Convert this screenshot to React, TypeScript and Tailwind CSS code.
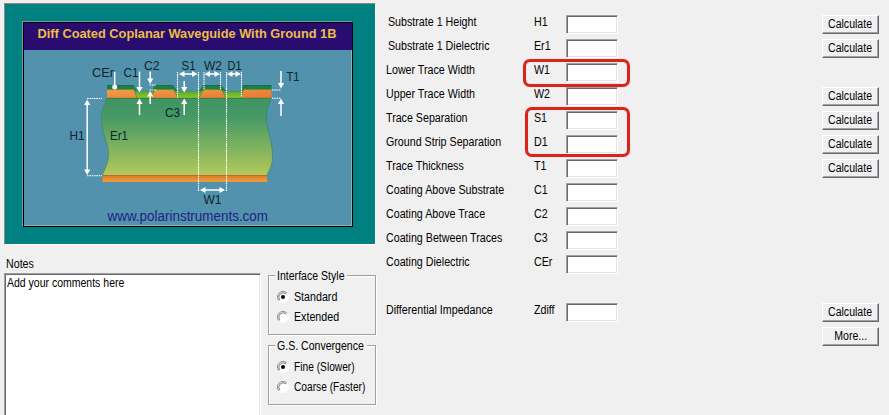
import type { ReactNode } from "react";

type Row = { label: string; symbol: string; calc?: boolean; indent?: boolean; gap?: boolean };

const rows: Row[] = [
  { label: "Substrate 1 Height", symbol: "H1", calc: true, indent: true },
  { label: "Substrate 1 Dielectric", symbol: "Er1", calc: true, indent: true },
  { label: "Lower Trace Width", symbol: "W1" },
  { label: "Upper Trace Width", symbol: "W2", calc: true },
  { label: "Trace Separation", symbol: "S1", calc: true },
  { label: "Ground Strip Separation", symbol: "D1", calc: true },
  { label: "Trace Thickness", symbol: "T1", calc: true },
  { label: "Coating Above Substrate", symbol: "C1" },
  { label: "Coating Above Trace", symbol: "C2" },
  { label: "Coating Between Traces", symbol: "C3" },
  { label: "Coating Dielectric", symbol: "CEr" },
  { label: "Differential Impedance", symbol: "Zdiff", calc: true, gap: true },
];

function Txt({ children, className = "origin-left scale-x-[0.89]" }: { children: ReactNode; className?: string }) {
  return <span className={`inline-block whitespace-nowrap ${className}`}>{children}</span>;
}

function Button({ children }: { children: ReactNode }) {
  return (
    <button className="flex h-[19px] w-[57px] shrink-0 items-center justify-center border border-t-white border-l-white border-r-[#696969] border-b-[#696969] bg-[#f0f0f0] leading-none shadow-[inset_-1px_-1px_0_#a0a0a0]">
      <Txt className="origin-center -translate-y-px scale-x-[0.88]">{children}</Txt>
    </button>
  );
}

function Field() {
  return (
    <input className="h-[19px] w-[52px] shrink-0 border border-t-[#a0a0a0] border-l-[#a0a0a0] border-r-white border-b-white bg-white shadow-[inset_1px_1px_0_#696969,inset_-1px_-1px_0_#e3e3e3] outline-none" />
  );
}

function Radio({ label, checked, tight }: { label: string; checked?: boolean; tight?: boolean }) {
  return (
    <label className="flex h-5 items-center">
      <svg width="12" height="12" viewBox="0 0 12 12" className="mr-[5px] shrink-0">
        <circle cx="6" cy="6" r="5" fill="#fff" />
        <path d="M2.1 9.9A5.5 5.5 0 0 1 9.9 2.1" fill="none" stroke="#8c8c8c" />
        <path d="M2.9 9.1A4.4 4.4 0 0 1 9.1 2.9" fill="none" stroke="#606060" strokeWidth="0.8" />
        <path d="M2.1 9.9A5.5 5.5 0 0 0 9.9 2.1" fill="none" stroke="#fff" />
        {checked && <circle cx="6" cy="6" r="2" fill="#000" />}
      </svg>
      <Txt className={tight ? "origin-left scale-x-[0.85]" : "origin-left scale-x-[0.89]"}>{label}</Txt>
    </label>
  );
}

function Group({ title, legendWidth, children }: { title: string; legendWidth: string; children: ReactNode }) {
  return (
    <fieldset className="relative h-[60px] w-[108px] min-w-0 border border-[#a0a0a0] pt-[11px] pl-[8px] shadow-[1px_1px_0_#fff,inset_1px_1px_0_#fff]">
      <div className={`absolute -top-[8px] left-[6px] h-[14px] bg-[#f0f0f0] pl-[2px] leading-[16px] ${legendWidth}`}>
        <Txt className="origin-left scale-x-[0.88]">{title}</Txt>
      </div>
      {children}
    </fieldset>
  );
}

type ArrowProps = { x: number; y: number; dir: "up" | "down" | "left" | "right" };

function Head({ x, y, dir }: ArrowProps) {
  const turn = { up: 0, right: 90, down: 180, left: 270 }[dir];
  return <path d="M0 0L3.1 5.5H-3.1Z" fill="#fff" transform={`translate(${x} ${y}) rotate(${turn})`} />;
}

function VArrow({ x, from, to }: { x: number; from: number; to: number }) {
  const down = to > from;
  return (
    <g>
      <path d={`M${x} ${from}V${down ? to - 4 : to + 4}`} stroke="#fff" strokeWidth="1.5" />
      <Head x={x} y={to} dir={down ? "down" : "up"} />
    </g>
  );
}

function HSpan({ y, a, b }: { y: number; a: number; b: number }) {
  return (
    <g>
      <path d={`M${a + 4} ${y}H${b - 4}`} stroke="#fff" strokeWidth="1.5" />
      <Head x={a} y={y} dir="left" />
      <Head x={b} y={y} dir="right" />
    </g>
  );
}

const marks: [string, number, number, number][] = [
  ["CEr", 92, 77, 22],
  ["C1", 123.5, 77, 15],
  ["C2", 144, 69.5, 15.5],
  ["S1", 181.5, 69.5, 14],
  ["W2", 204, 69.5, 18],
  ["D1", 227.5, 69.5, 14],
  ["T1", 286.5, 81, 13],
  ["C3", 165, 117, 15],
  ["H1", 69.5, 139.5, 15],
  ["Er1", 110, 139.5, 18],
  ["W1", 203.5, 203.5, 18],
];

function Diagram() {
  return (
    <svg width="328" height="175" viewBox="24 50 328 175" className="block" fontFamily="Liberation Sans, Arial, sans-serif">
      <defs>
        <linearGradient id="substrate" x1="0" y1="0" x2="0" y2="1">
          <stop offset="0" stopColor="#3f9461" />
          <stop offset="0.25" stopColor="#479966" />
          <stop offset="0.6" stopColor="#79b05f" />
          <stop offset="1" stopColor="#b5ca5c" />
        </linearGradient>
        <linearGradient id="copper" x1="0" y1="0" x2="1" y2="1">
          <stop offset="0" stopColor="#ef9e48" />
          <stop offset="1" stopColor="#e57a30" />
        </linearGradient>
        <linearGradient id="ground" x1="0" y1="0" x2="0" y2="1">
          <stop offset="0" stopColor="#d97a2c" />
          <stop offset="1" stopColor="#f2a03a" />
        </linearGradient>
        <linearGradient id="resin" x1="0" y1="0" x2="0" y2="1">
          <stop offset="0" stopColor="#5fa82c" />
          <stop offset="1" stopColor="#86cb2e" />
        </linearGradient>
      </defs>

      <path d="M107 98C104 106 101 110 101.300 119C102 134 108 142 108.500 153C108.800 163 105 168 102 176H267C268 171 272 168 272.500 158C273 143 266.500 130 266.500 116C266.500 108 270 104 271 98Z" fill="url(#substrate)" stroke="#37805c" strokeWidth="0.6" />
      <rect x="102.500" y="175.500" width="164.500" height="6.500" fill="url(#ground)" />
      <path d="M102.500 175.500H267" stroke="#b96a2b" />

      <path d="M107 85H133.500L137.500 91.500H151L155 85H173L178 91.500H198.500L203 85H221L226.500 91.500H240.500L243 85H271.500V91H107Z" fill="#1c8048" />
      <path d="M107 85.700H133.500M154.500 85.700H173M203 85.700H221M243 85.700H271.500" stroke="#127046" />
      <path d="M136 91.500H153V98H136ZM176 91.500H201V98H176ZM225 91.500H243V98H225Z" fill="url(#resin)" />
      <path d="M107 89.500H134L137 98H107ZM155 89.500H173.500L178 98H151ZM203.500 89.500H221.500L226 98H199ZM243.500 89.500H271.500V98H241Z" fill="url(#copper)" />
      <path d="M107 89.500H134L137 98M151 98L155 89.500H173.500L178 98M199 98L203.500 89.500H221.500L226 98M241 98L243.500 89.500H271.500" fill="none" stroke="#6d8637" strokeWidth="0.8" />
      <path d="M107 98.300H271" stroke="#3c7945" strokeWidth="0.9" />

      <g stroke="#fff" strokeDasharray="1.6 0.7" strokeWidth="1.1" fill="none">
        <path d="M177.500 72V98M198.500 72V191M204 72V89M220.500 72V89M226.500 72V191M241.500 72V97" />
        <path d="M87 98.500H102M87 175.800H102M149.500 85H156M149.500 90H156M272 90H281M272 98.300H281" />
      </g>
      <path d="M114.700 72V87" stroke="#fff" strokeWidth="1.4" />
      <circle cx="114.700" cy="87" r="2.500" fill="#fff" />
      <VArrow x={139.5} from={71.5} to={92.5} />
      <VArrow x={139.5} from={115} to={98.5} />
      <VArrow x={150.2} from={71.5} to={84} />
      <VArrow x={150.2} from={104} to={91} />
      <VArrow x={184.2} from={81} to={92.5} />
      <VArrow x={184.2} from={115} to={98.5} />
      <VArrow x={281} from={71} to={88.5} />
      <VArrow x={281} from={116} to={98.5} />
      <VArrow x={87.2} from={137} to={99.5} />
      <VArrow x={87.2} from={137} to={175} />
      <HSpan y={74} a={179} b={197.5} />
      <HSpan y={74} a={204.5} b={220} />
      <HSpan y={74} a={227} b={241} />
      <HSpan y={190} a={200} b={225} />

      {marks.map(([label, x, y, width]) => (
        <text key={label} x={x} y={y} textLength={width} lengthAdjust="spacingAndGlyphs" fontSize="13" fill="#0b252d">
          {label}
        </text>
      ))}
      <text x="107.500" y="221" textLength="160.500" lengthAdjust="spacingAndGlyphs" fontSize="14" fill="#1e1f83">
        www.polarinstruments.com
      </text>
    </svg>
  );
}

export default function App() {
  return (
    <main className="relative flex h-[415px] w-[889px] overflow-hidden bg-[#f0f0f0] font-['Liberation_Sans',Arial,sans-serif] text-[12px] leading-[14px] text-black">
      <section className="w-[386px] shrink-0 pt-[3px] pl-[4px]">
        <div className="h-[242px] w-[372px] border border-t-[#8a8a8a] border-l-[#8a8a8a] border-r-white border-b-white bg-[#008080] pt-[18px] pl-[18px]">
          <div className="h-[205px] w-[330px] border border-black bg-[#5392ad] shadow-[-1px_-1px_0_#829a9c,inset_-1px_-1px_0_#9cabb2]">
            <h1 className="h-[27px] bg-[#290c70]">
              <svg width="328" height="27" viewBox="24 23 328 27" className="block" fontFamily="Liberation Sans, Arial, sans-serif">
                <text x="37.500" y="37.500" textLength="299" lengthAdjust="spacingAndGlyphs" fontSize="13.500" fontWeight="700" fill="#edbd45">
                  Diff Coated Coplanar Waveguide With Ground 1B
                </text>
              </svg>
            </h1>
            <Diagram />
          </div>
        </div>

        <div className="flex">
          <div className="w-[257px] shrink-0">
            <div className="mt-[12px] ml-[2px] h-[16px]">
              <Txt>Notes</Txt>
            </div>
            <div className="h-[160px] w-[257px] border border-t-[#a0a0a0] border-l-[#a0a0a0] border-r-white border-b-white bg-white pt-[2px] pl-[2px] shadow-[inset_1px_1px_0_#696969,inset_-1px_0_0_#e3e3e3]">
              <Txt className="origin-left scale-x-[0.875]">Add your comments here</Txt>
            </div>
          </div>
          <div className="mt-[30px] ml-[7px] flex flex-col gap-[10px]">
            <Group title="Interface Style" legendWidth="w-[72px]">
              <Radio label="Standard" checked />
              <Radio label="Extended" />
            </Group>
            <Group title="G.S. Convergence" legendWidth="w-[92px]">
              <Radio label="Fine (Slower)" checked tight />
              <Radio label="Coarse (Faster)" tight />
            </Group>
          </div>
        </div>
      </section>

      <section className="w-[493px] pt-[15px]">
        {rows.map((row) => (
          <div key={row.symbol} className={`flex h-6 items-start ${row.gap ? "mt-6" : ""}`}>
            <div className={`w-[148px] shrink-0 ${row.indent ? "pl-[2px]" : ""}`}>
              <Txt>{row.label}</Txt>
            </div>
            <div className="w-[32px] shrink-0">
              <Txt>{row.symbol}</Txt>
            </div>
            <Field />
            <div className="ml-auto">{row.calc && <Button>Calculate</Button>}</div>
          </div>
        ))}
        <div className="flex justify-end">
          <Button>More...</Button>
        </div>
      </section>

      <div className="absolute top-[59px] left-[523px] h-[28px] w-[107px] rounded-[7px] border-[3px] border-[#d4261f] shadow-[0_0_1px_#f58c86,inset_0_0_1px_#f58c86]" />
      <div className="absolute top-[107px] left-[525px] h-[50px] w-[105px] rounded-[7px] border-[3px] border-[#d4261f] shadow-[0_0_1px_#f58c86,inset_0_0_1px_#f58c86]" />
    </main>
  );
}
